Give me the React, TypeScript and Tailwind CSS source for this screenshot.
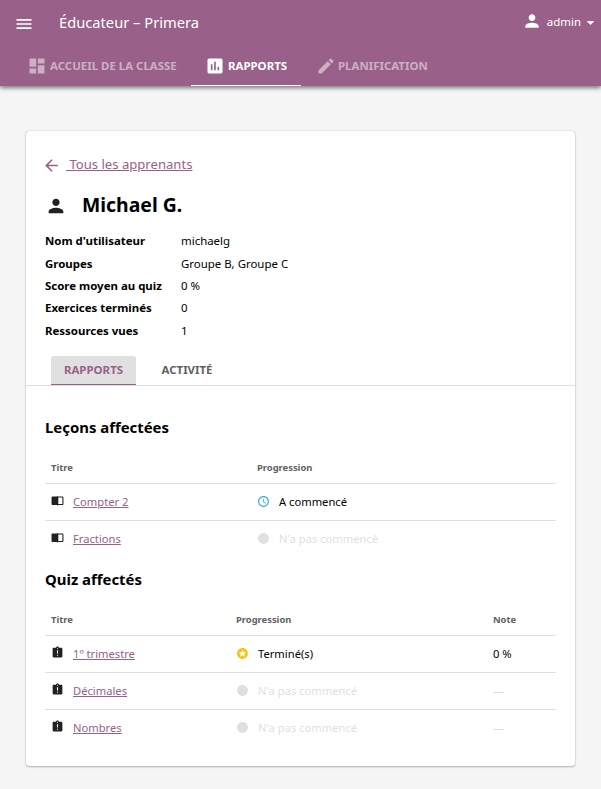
import React from "react";
import {
  MdMenu, MdDashboard, MdAssessment, MdEdit, MdPerson, MdArrowDropDown,
  MdArrowBack, MdAssignmentLate, MdSchedule, MdStars, MdLens,
} from "react-icons/md";

const details = [
  ["Nom d'utilisateur", "michaelg"],
  ["Groupes", "Groupe B, Groupe C"],
  ["Score moyen au quiz", "0 %"],
  ["Exercices terminés", "0"],
  ["Ressources vues", "1"],
];

type Status = "none" | "started" | "done";
const labels = { none: "N'a pas commencé", started: "A commencé", done: "Terminé(s)" };

function Progress({ status }: { status: Status }) {
  return (
    <div className={`flex items-center gap-[9px] ${status === "none" ? "text-[#dfdfdf]" : "text-black"}`}>
      {status === "none" && <MdLens size={13} className="-mt-[2px]" />}
      {status === "started" && <MdSchedule size={13} className="-mt-[2px] text-[#28abe3]" />}
      {status === "done" && <MdStars size={13} className="-mt-[2px] text-[#fdc010]" />}
      <span>{labels[status]}</span>
    </div>
  );
}

function LessonIcon() {
  return (
    <svg width="13" height="13" viewBox="0 0 24 24" fill="currentColor">
      <path d="M21 4.500H13.200L12 3.500l-1.200 1H3c-1.100 0-2 .9-2 2V18.500c0 1.100.9 2 2 2h7.800l1.200 1 1.200-1H21c1.100 0 2-.9 2-2V6.500c0-1.100-.9-2-2-2zm0 14h-7.500V6.500H21v12z" />
    </svg>
  );
}

function Title({ text, quiz }: { text: string; quiz?: boolean }) {
  return (
    <div className="flex items-center gap-[9px]">
      <span className="-mt-[3px] text-[#212121]">{quiz ? <MdAssignmentLate size={13} /> : <LessonIcon />}</span>
      <a className="text-[#996189] underline">{text}</a>
    </div>
  );
}

const head = "h-[32px] items-center pt-px text-[9.4px] font-bold text-[#616161]";
const row = "h-[37px] items-center border-t border-[#dedede] text-[11.2px]";
const lessonCols = "grid grid-cols-[206px_1fr] pl-[6px]";
const quizCols = "grid grid-cols-[185px_257px_1fr] pl-[6px]";

export default function App() {
  return (
    <div className="h-[789px] w-[601px] overflow-hidden bg-[#f5f5f5] font-['Noto_Sans',sans-serif] text-[11.45px] leading-[16px] text-black">
      <header className="flex h-[86px] flex-col bg-[#996189] text-white shadow-[0_2px_4px_rgba(0,0,0,0.4),0_1px_6px_rgba(0,0,0,0.2)]">
        <div className="flex h-[46px] items-center pl-[14px] pr-px">
          <MdMenu size={20} className="mt-px" />
          <h1 className="-mt-[2px] ml-[25px] text-[14.7px]">Éducateur – Primera</h1>
          <div className="mb-[3px] ml-auto flex items-center">
            <MdPerson size={20} className="mb-[2px]" />
            <span className="ml-[5px]">admin</span>
            <MdArrowDropDown size={19} className="mt-px" />
          </div>
        </div>
        <nav className="flex h-[40px] pl-[13px] font-bold text-white/50">
          <div className="flex w-[178px] items-center whitespace-nowrap pl-[14px]">
            <MdDashboard size={20} className="shrink-0" /><span className="ml-[3px]">ACCUEIL DE LA CLASSE</span>
          </div>
          <div className="flex w-[110px] items-center border-b border-white pl-[14px] text-white">
            <MdAssessment size={20} /><span className="ml-[3px]">RAPPORTS</span>
          </div>
          <div className="flex items-center pl-[15px]">
            <MdEdit size={20} /><span className="ml-[2px]">PLANIFICATION</span>
          </div>
        </nav>
      </header>

      <main className="ml-[26px] mt-[45px] h-[635px] w-[549px] rounded-[3px] bg-white shadow-[0_1px_2px_rgba(0,0,0,0.25),0_0_1px_rgba(0,0,0,0.4)]">
        <div className="h-[225px] px-[19px] pt-[24px]">
          <a className="flex h-[18px] items-center text-[13.1px] text-[#996189]">
            <MdArrowBack size={19} className="-ml-[3px] mt-[2px]" />
            <span className="ml-[5px] whitespace-pre underline"> Tous les apprenants</span>
          </a>
          <div className="mt-[18px] flex h-[28px] items-center">
            <MdPerson size={22} className="mt-[2px] text-[#212121]" />
            <h2 className="ml-[15px] text-[19.4px] font-bold">Michael G.</h2>
          </div>
          <dl className="mt-[11.2px] grid grid-cols-[136px_1fr]">
            {details.map(([k, v]) => (
              <React.Fragment key={k}>
                <dt className="h-[22.4px] font-bold leading-[22.4px]">{k}</dt>
                <dd className="leading-[22.4px]">{v}</dd>
              </React.Fragment>
            ))}
          </dl>
        </div>
        <div className="flex h-[30px] border-b border-[#dedede] pl-[25px] font-bold">
          <div className="flex w-[85px] items-center justify-center rounded-t-[3px] border-b border-[#996189] bg-[#e0e0e0] text-[#996189]">RAPPORTS</div>
          <div className="flex w-[102px] items-center justify-center pb-px text-[#616161]">ACTIVITÉ</div>
        </div>
        <div className="px-[19px] pt-[30px]">
          <h3 className="h-[22px] text-[14.9px] font-bold leading-[22px]">Leçons affectées</h3>
          <section className="mt-[13px]">
            <div className={`${lessonCols} ${head}`}><span>Titre</span><span>Progression</span></div>
            <div className={`${lessonCols} ${row}`}><Title text="Compter 2" /><Progress status="started" /></div>
            <div className={`${lessonCols} ${row}`}><Title text="Fractions" /><Progress status="none" /></div>
          </section>
          <h3 className="mt-[11px] h-[22px] text-[14.9px] font-bold leading-[22px]">Quiz affectés</h3>
          <section className="mt-[13px]">
            <div className={`${quizCols} ${head}`}><span>Titre</span><span>Progression</span><span>Note</span></div>
            <div className={`${quizCols} ${row}`}><Title quiz text="1º trimestre" /><Progress status="done" /><span>0 %</span></div>
            <div className={`${quizCols} ${row}`}><Title quiz text="Décimales" /><Progress status="none" /><span className="text-[#dfdfdf]">—</span></div>
            <div className={`${quizCols} ${row}`}><Title quiz text="Nombres" /><Progress status="none" /><span className="text-[#dfdfdf]">—</span></div>
          </section>
        </div>
      </main>
    </div>
  );
}
